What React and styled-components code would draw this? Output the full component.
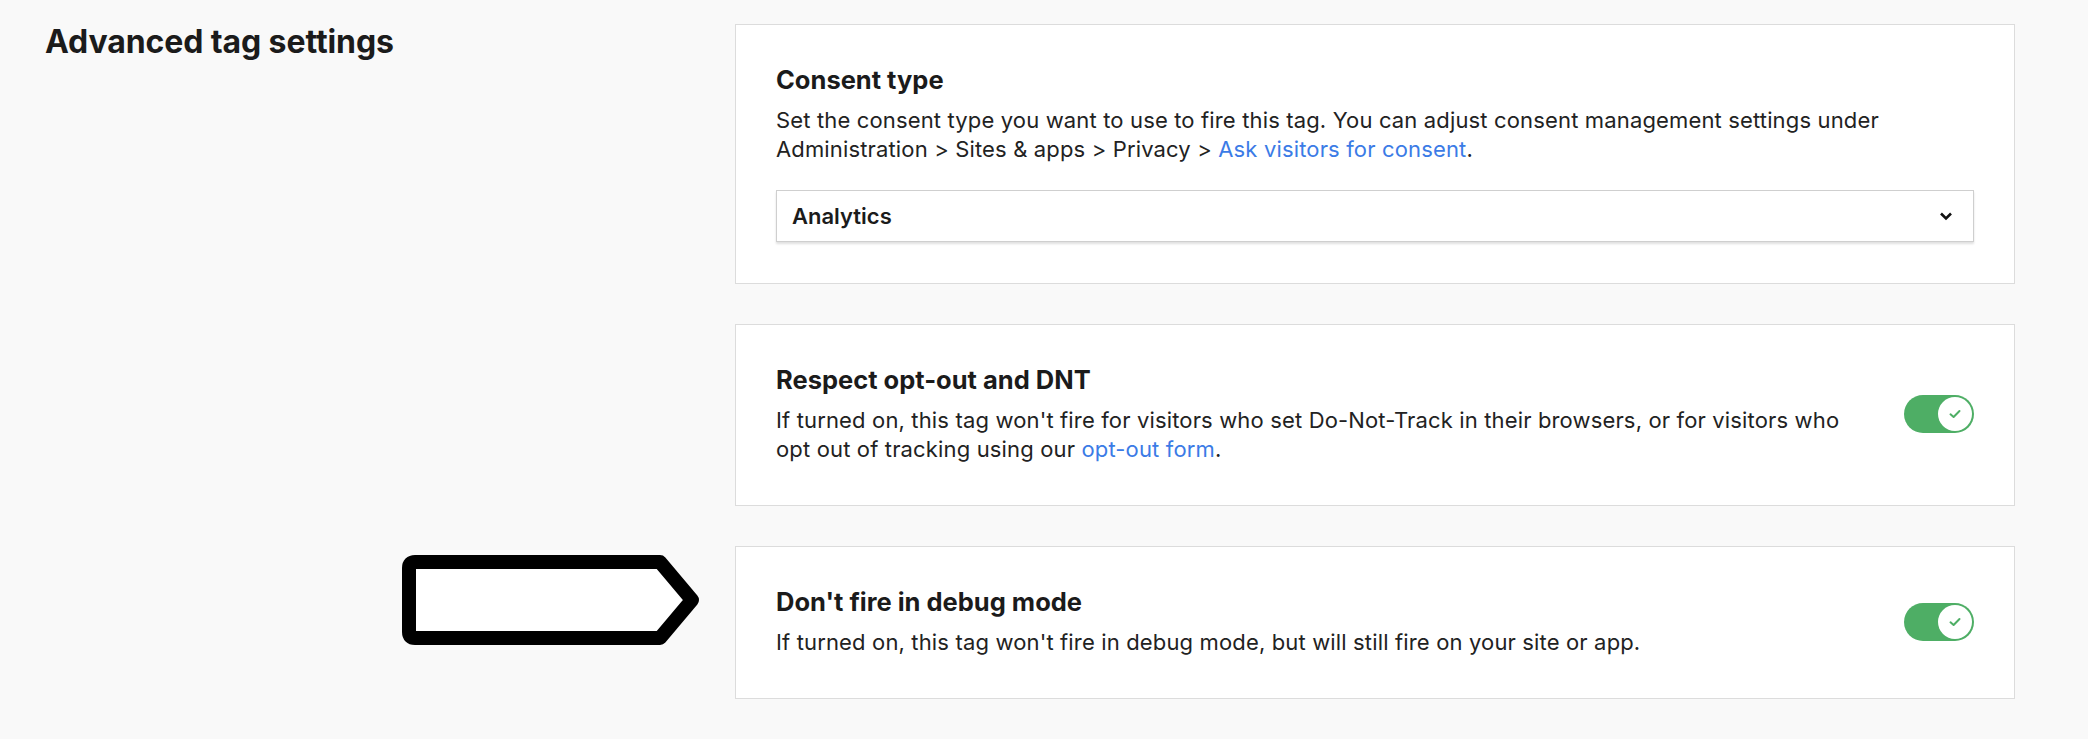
import React, {useState} from 'react';
import styled, {createGlobalStyle} from 'styled-components';

const GlobalStyle = createGlobalStyle`
    html, body {
        margin: 0;
        padding: 0;
        background: #f9f9f9;
    }

    body {
        font-family: Inter, "Noto Sans", "Liberation Sans", sans-serif;
        color: #1b1b1b;
        -webkit-font-smoothing: antialiased;
    }
`;

const Page = styled.div`
    position: relative;
    display: flex;
    align-items: flex-start;
    padding: 24px 0 42px 45px;
    min-height: 739px;
    box-sizing: border-box;
`;

const SideTitle = styled.h2`
    width: 690px;
    flex-shrink: 0;
    margin: 0;
    font-size: 32px;
    line-height: 36px;
    font-weight: 700;
    letter-spacing: -0.1px;
`;

const Cards = styled.div`
    width: 1280px;
    display: flex;
    flex-direction: column;
    gap: 40px;
`;

const Card = styled.section`
    background: #fff;
    border: 1px solid #dcdcdc;
    padding: 39px 40px 41px;
    display: flex;
    align-items: center;
    gap: 40px;
`;

const Body = styled.div`
    flex: 1;
    min-width: 0;
`;

const Title = styled.h3`
    margin: 0 0 10px;
    font-size: 25.5px;
    line-height: 32px;
    font-weight: 700;
`;

const Text = styled.p`
    margin: 0;
    font-size: 22px;
    line-height: 29px;
    letter-spacing: 0.15px;
    color: #222;
`;

const Link = styled.a`
    color: #3b7be6;
    text-decoration: none;
`;

const SelectBox = styled.div`
    margin-top: 26px;
    height: 52px;
    box-sizing: border-box;
    border: 1px solid #cfcfcf;
    box-shadow: 0 2px 2px rgba(0, 0, 0, 0.12);
    display: flex;
    align-items: center;
    justify-content: space-between;
    padding: 0 20px 0 15px;
    font-size: 22px;
    font-weight: 600;
    background: #fff;
`;

const Switch = styled.button`
    flex-shrink: 0;
    width: 70px;
    height: 38px;
    border: none;
    border-radius: 19px;
    padding: 2px;
    background: ${({$on}) => $on ? '#4eae65' : '#c8c8c8'};
    display: flex;
    justify-content: ${({$on}) => $on ? 'flex-end' : 'flex-start'};
    align-items: center;
    cursor: pointer;
`;

const Knob = styled.span`
    width: 34px;
    height: 34px;
    border-radius: 50%;
    background: #fff;
    display: flex;
    align-items: center;
    justify-content: center;
`;

const Marker = styled.svg`
    position: absolute;
    left: 395px;
    top: 548px;
`;

const Chevron = () => (
    <svg width="14" height="10" viewBox="0 0 14 10">
        <path d="M2 2.5 L7 7.5 L12 2.5" fill="none" stroke="#111" strokeWidth="2.6"/>
    </svg>
);

const Check = () => (
    <svg width="14" height="12" viewBox="0 0 14 12">
        <path d="M2.5 6.3 L5.6 9 L11.5 3" fill="none" stroke="#4eae65" strokeWidth="2"
              strokeLinecap="round" strokeLinejoin="round"/>
    </svg>
);

const Toggle = ({initial = true}) => {
    const [on, setOn] = useState(initial);
    return (
        <Switch $on={on} onClick={() => setOn(v => !v)} aria-pressed={on}>
            <Knob>{on && <Check/>}</Knob>
        </Switch>
    );
};

const App = () => (
    <>
        <GlobalStyle/>
        <Page>
            <SideTitle>Advanced tag settings</SideTitle>

            <Cards>
                <Card>
                    <Body>
                        <Title>Consent type</Title>
                        <Text>
                            Set the consent type you want to use to fire this tag. You can adjust consent
                            management settings under Administration &gt; Sites &amp; apps &gt; Privacy &gt;{' '}
                            <Link href="#">Ask visitors for consent</Link>.
                        </Text>
                        <SelectBox>
                            Analytics
                            <Chevron/>
                        </SelectBox>
                    </Body>
                </Card>

                <Card>
                    <Body>
                        <Title>Respect opt-out and DNT</Title>
                        <Text>
                            If turned on, this tag won't fire for visitors who set Do-Not-Track in their
                            browsers, or for visitors who opt out of tracking using our{' '}
                            <Link href="#">opt-out form</Link>.
                        </Text>
                    </Body>
                    <Toggle/>
                </Card>

                <Card>
                    <Body>
                        <Title>Don't fire in debug mode</Title>
                        <Text>
                            If turned on, this tag won't fire in debug mode, but will still fire on your site or app.
                        </Text>
                    </Body>
                    <Toggle/>
                </Card>
            </Cards>

            {/* callout pointing at the debug mode card */}
            <Marker width="312" height="104" viewBox="0 0 312 104">
                <path d="M20 14 H265 L297 52 L265 90 H20 Q14 90 14 84 V20 Q14 14 20 14 Z"
                      fill="#fff" stroke="#000" strokeWidth="14" strokeLinejoin="round"/>
            </Marker>
        </Page>
    </>
);

export default App;
